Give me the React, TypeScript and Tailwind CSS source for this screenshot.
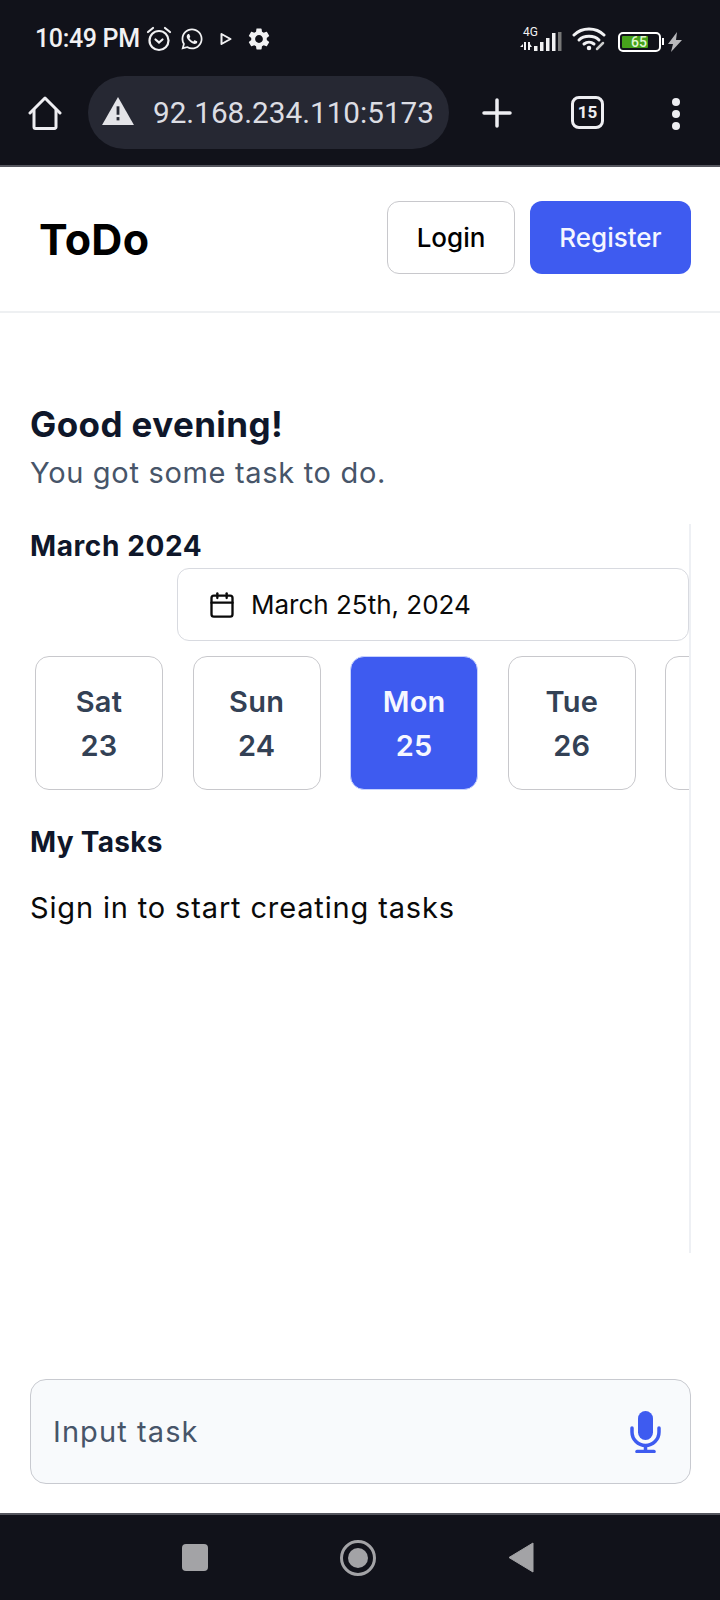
import { Calendar } from "lucide-react";
import { FaWhatsapp } from "react-icons/fa";
import { MdSettings } from "react-icons/md";

const days = [
  { name: "Sat", date: "23" },
  { name: "Sun", date: "24" },
  { name: "Mon", date: "25", active: true },
  { name: "Tue", date: "26" },
  // only the edge of this one shows before the scroller cuts it off
  { name: "", date: "" },
];

function StatusBar() {
  return (
    <div className="flex h-[76px] items-center pl-[35px] pr-[38px] pt-[1px] text-[#f1f1f3]">
      <span className="w-[110px] font-['Roboto',sans-serif] text-[25px] font-medium tracking-[-0.35px]">10:49 PM</span>
      <svg className="h-[28px] w-[28px]" viewBox="0 0 28 28" fill="none" stroke="currentColor" strokeWidth="2.2" strokeLinecap="round">
        <circle cx="14" cy="15.5" r="9.5" />
        <path d="M3 7l5-4M25 7l-5-4" />
        <path d="M10.5 14.5l3.5 3 3.5-3" />
      </svg>
      <FaWhatsapp className="ml-[7px] h-[24px] w-[24px]" />
      <svg className="ml-[15px] h-[14px] w-[14px]" viewBox="0 0 14 14" fill="none" stroke="currentColor" strokeWidth="2">
        <path d="M2.5 2l9 5-9 5z" strokeLinejoin="round" />
      </svg>
      <MdSettings className="ml-[13px] h-[26px] w-[26px]" />
      <div className="ml-auto flex items-end">
        <div className="relative h-[24px] w-[44px]">
          <span className="absolute left-[4px] top-[-3px] font-['Roboto',sans-serif] text-[12px] leading-[14px]">4G</span>
          <svg className="absolute inset-0" viewBox="0 0 44 24" fill="currentColor">
            <path d="M1 19h3v-3l-3 3zM5 14h2v8H5zM9 14h2v8H9zM11 19h2l-2-3z" />
            <rect x="15" y="18" width="3.5" height="5" />
            <rect x="21" y="14" width="3.5" height="9" />
            <rect x="27" y="10" width="3.5" height="13" />
            <rect x="33" y="5" width="3.5" height="18" />
            <rect x="39" y="4" width="3.5" height="19" fill="#777" />
          </svg>
        </div>
        <svg className="ml-[9px] h-[26px] w-[36px]" viewBox="0 0 36 26" fill="none" stroke="currentColor" strokeLinecap="round">
          <path d="M2 9c8-8 22-8 30 0" strokeWidth="3" />
          <path d="M7 14c5-5 15-5 20 0" strokeWidth="3" />
          <path d="M12 18c3-2.500 7-2.500 10 0" strokeWidth="3" />
          <circle cx="17" cy="22" r="1.500" fill="currentColor" strokeWidth="1.500" />
          <path d="M25 23l6-6" strokeWidth="2.500" stroke="#ccc" />
        </svg>
        <div className="ml-[10px] flex items-center">
          <div className="flex h-[20px] w-[43px] items-center rounded-[5px] border-2 border-white p-[2px]">
            <div className="relative h-full w-[26px] rounded-[1px] bg-[#46a11b]">
              <span className="absolute left-[9px] top-[-3px] font-['Roboto',sans-serif] text-[14px] leading-[18px] font-medium text-[#dff5cf]">65</span>
            </div>
          </div>
          <div className="ml-[1px] h-[7px] w-[2px] bg-white" />
        </div>
        <svg className="ml-[4px] h-[20px] w-[14px]" viewBox="0 0 14 20" fill="#b8b8bb">
          <path d="M9 0L0 12h5l-2 8 11-12H8z" />
        </svg>
      </div>
    </div>
  );
}

function BrowserBar() {
  return (
    <div className="flex h-[89px] items-start pl-[28px] text-[#eeeef2]">
      <svg className="mt-[19px] h-[36px] w-[34px]" viewBox="0 0 34 36" fill="none" stroke="currentColor" strokeWidth="3" strokeLinejoin="round" strokeLinecap="round">
        <path d="M2 18L17 3l15 15" />
        <path d="M6 15v17a1.500 1.500 0 0 0 1.500 1.500h19A1.500 1.500 0 0 0 28 32V15" />
      </svg>
      <div className="ml-[26px] flex h-[73px] w-[361px] items-center rounded-full bg-[#262833] pl-[14px]">
        <svg className="mb-[4px] h-[30px] w-[32px]" viewBox="0 0 34 32">
          <path d="M17 1L34 31H0z" fill="#e4e4e8" />
          <rect x="15.500" y="11" width="3" height="9" fill="#262833" />
          <rect x="15.500" y="22.500" width="3" height="3.500" fill="#262833" />
        </svg>
        <span className="ml-[19px] whitespace-nowrap pt-[2px] font-['Roboto',sans-serif] text-[29.7px] text-[#dcdde3]">92.168.234.110:5173</span>
      </div>
      <svg className="ml-[33px] mt-[22px] h-[30px] w-[30px]" viewBox="0 0 30 30" stroke="currentColor" strokeWidth="3.500" strokeLinecap="round">
        <path d="M15 2v26M2 15h26" />
      </svg>
      <div className="ml-[59px] mt-[20px] flex h-[33px] w-[33px] items-center justify-center rounded-[8px] border-[3px] border-[#eeeef2] font-['Roboto',sans-serif] text-[17px] font-bold">
        15
      </div>
      <div className="ml-[68px] mt-[22px] flex flex-col gap-[4px]">
        <div className="h-[8px] w-[8px] rounded-full bg-[#eeeef2]" />
        <div className="h-[8px] w-[8px] rounded-full bg-[#eeeef2]" />
        <div className="h-[8px] w-[8px] rounded-full bg-[#eeeef2]" />
      </div>
    </div>
  );
}

function DayCard({ name, date, active }: { name: string; date: string; active?: boolean }) {
  return (
    <div
      className={`flex h-[134px] w-[128px] shrink-0 flex-col items-center rounded-[14px] border pt-[27px] text-[29px] font-semibold tracking-[0.2px] ${
        active ? "border-[#c7d2fe] bg-[#3e5bf0] text-[#f6f7ff]" : "border-[#c8c8cc] bg-white text-[#334155]"
      }`}
    >
      <span className="h-[44px] leading-[36px]">{name}</span>
      <span className="leading-[36px]">{date}</span>
    </div>
  );
}

export default function App() {
  return (
    <div className="flex h-[1600px] w-[720px] flex-col overflow-hidden bg-white font-['Inter',sans-serif]">
      <div className="h-[167px] shrink-0 border-b-2 border-[#55565e] bg-[#11121a]">
        <StatusBar />
        <BrowserBar />
      </div>

      <header className="flex h-[146px] shrink-0 items-center border-b-2 border-[#eef0f2] pl-[39px] pr-[29px]">
        <span className="text-[43px] font-bold tracking-[0.3px] text-black">ToDo</span>
        <button className="ml-auto mt-[-3px] h-[73px] w-[128px] rounded-[12px] border border-[#c8c8cc] bg-white text-[26px] font-medium text-black">
          Login
        </button>
        <button className="ml-[15px] mt-[-3px] h-[73px] w-[161px] rounded-[12px] bg-[#3e5bf0] text-[26px] font-medium text-[#f4f6ff]">
          Register
        </button>
      </header>

      <main className="flex flex-1 flex-col pl-[30px]">
        <h1 className="mt-[88px] text-[35px] leading-[46px] font-bold tracking-[0.4px] text-[#0f172a]">Good evening!</h1>
        <p className="mt-[6px] text-[29px] leading-[40px] tracking-[0.68px] text-[#475569]">You got some task to do.</p>

        <section className="mt-[31px] h-[729px] w-[661px] border-r-2 border-[#eef0f4]">
          <h2 className="mt-[2px] text-[28px] leading-[40px] font-bold tracking-[0.6px] text-[#0f172a]">March 2024</h2>
          <div className="ml-auto mt-[2px] flex h-[73px] w-[512px] items-center rounded-[12px] border border-[#d8dae0] pl-[30px] text-[26px] text-[#0a0a0a]">
            <Calendar className="h-[28px] w-[28px]" strokeWidth={2} />
            <span className="ml-[15px]">March 25th, 2024</span>
          </div>
          <div className="mt-[15px] flex gap-[29.6px] overflow-hidden pl-[5px]">
            {days.map((d) => (
              <DayCard key={d.name || "next"} {...d} />
            ))}
          </div>
          <h2 className="mt-[32px] text-[28px] leading-[40px] font-bold tracking-[0.3px] text-[#0f172a]">My Tasks</h2>
          <p className="mt-[26px] text-[29px] leading-[40px] tracking-[0.85px] text-[#0a0a0a]">Sign in to start creating tasks</p>
        </section>

        <div className="mt-[126px] flex h-[105px] w-[661px] items-center rounded-[16px] border border-[#c8cad0] bg-[#f8fafc] pl-[22px] pr-[29px]">
          <span className="text-[29px] tracking-[1.1px] text-[#475569]">Input task</span>
          <svg className="ml-auto h-[42px] w-[31px] text-[#3e5bf0]" viewBox="0 0 31 42" fill="none" stroke="currentColor">
            <rect x="8" y="0" width="15" height="29" rx="7.500" fill="currentColor" stroke="none" />
            <path d="M2 17v4a13.500 13.500 0 0 0 27 0v-4" strokeWidth="3.500" strokeLinecap="round" />
            <path d="M15.500 34v5" strokeWidth="3.500" />
            <path d="M7 40.500h17" strokeWidth="3.500" strokeLinecap="round" />
          </svg>
        </div>
      </main>

      <footer className="flex h-[87px] shrink-0 items-center border-t-2 border-[#55565e] bg-[#11121a] pl-[182px]">
        <div className="h-[27px] w-[26px] rounded-[4px] bg-[#a3a3a6]" />
        <div className="ml-[132px] flex h-[36px] w-[36px] items-center justify-center rounded-full border-[3px] border-[#a3a3a6]">
          <div className="h-[20px] w-[20px] rounded-full bg-[#a3a3a6]" />
        </div>
        <svg className="ml-[132px] h-[31px] w-[26px]" viewBox="0 0 26 31" fill="#a3a3a6">
          <path d="M25 1v29L1 15.500z" stroke="#a3a3a6" strokeLinejoin="round" />
        </svg>
      </footer>
    </div>
  );
}
